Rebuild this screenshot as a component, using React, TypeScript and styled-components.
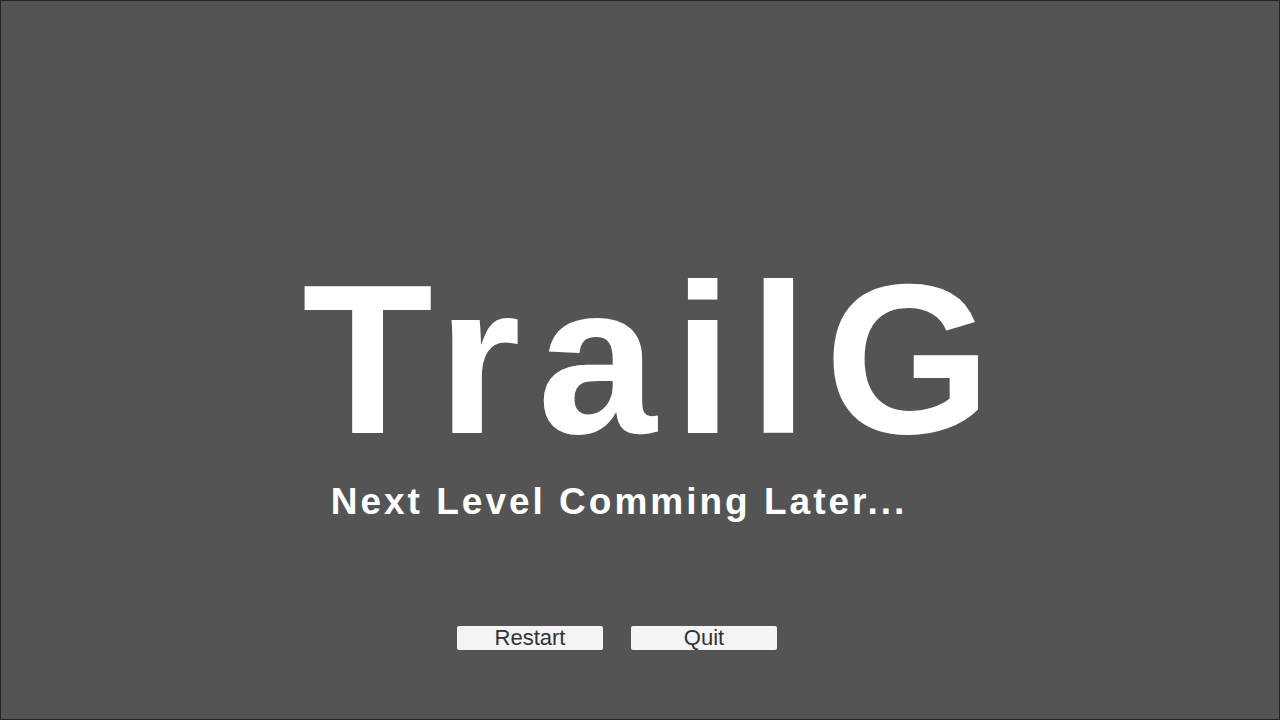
import React from "react";
import styled, { createGlobalStyle } from "styled-components";

const GlobalStyle = createGlobalStyle`
  html, body {
    margin: 0;
    padding: 0;
    background: #545454;
  }
  * {
    box-sizing: border-box;
  }
`;

const Screen = styled.div`
  width: 1280px;
  height: 720px;
  background: #545454;
  border: 1px solid #262626;
  display: flex;
  flex-direction: column;
  align-items: center;
  font-family: "Liberation Sans", Arial, sans-serif;
  color: #ffffff;
`;

const Title = styled.h1`
  margin: 251px 0 0 30px;
  font-size: 214px;
  line-height: 214px;
  font-weight: 700;
  letter-spacing: 16.5px;
`;

const Subtitle = styled.p`
  margin: 14px 0 0 -42px;
  font-size: 37px;
  line-height: 44px;
  font-weight: 700;
  letter-spacing: 3px;
`;

const ButtonRow = styled.div`
  display: flex;
  gap: 28px;
  margin-top: 102px;
  margin-left: -46px;
`;

const MenuButton = styled.button`
  width: 146px;
  height: 24px;
  padding: 0;
  border: none;
  border-radius: 2px;
  background: #f4f4f4;
  color: #323232;
  font-family: "Liberation Sans", Arial, sans-serif;
  font-size: 22px;
  line-height: 24px;
  cursor: pointer;
`;

export default function App() {
  return (
    <>
      <GlobalStyle />
      <Screen>
        <Title>TrailG</Title>
        <Subtitle>Next Level Comming Later...</Subtitle>
        <ButtonRow>
          <MenuButton>Restart</MenuButton>
          <MenuButton>Quit</MenuButton>
        </ButtonRow>
      </Screen>
    </>
  );
}
